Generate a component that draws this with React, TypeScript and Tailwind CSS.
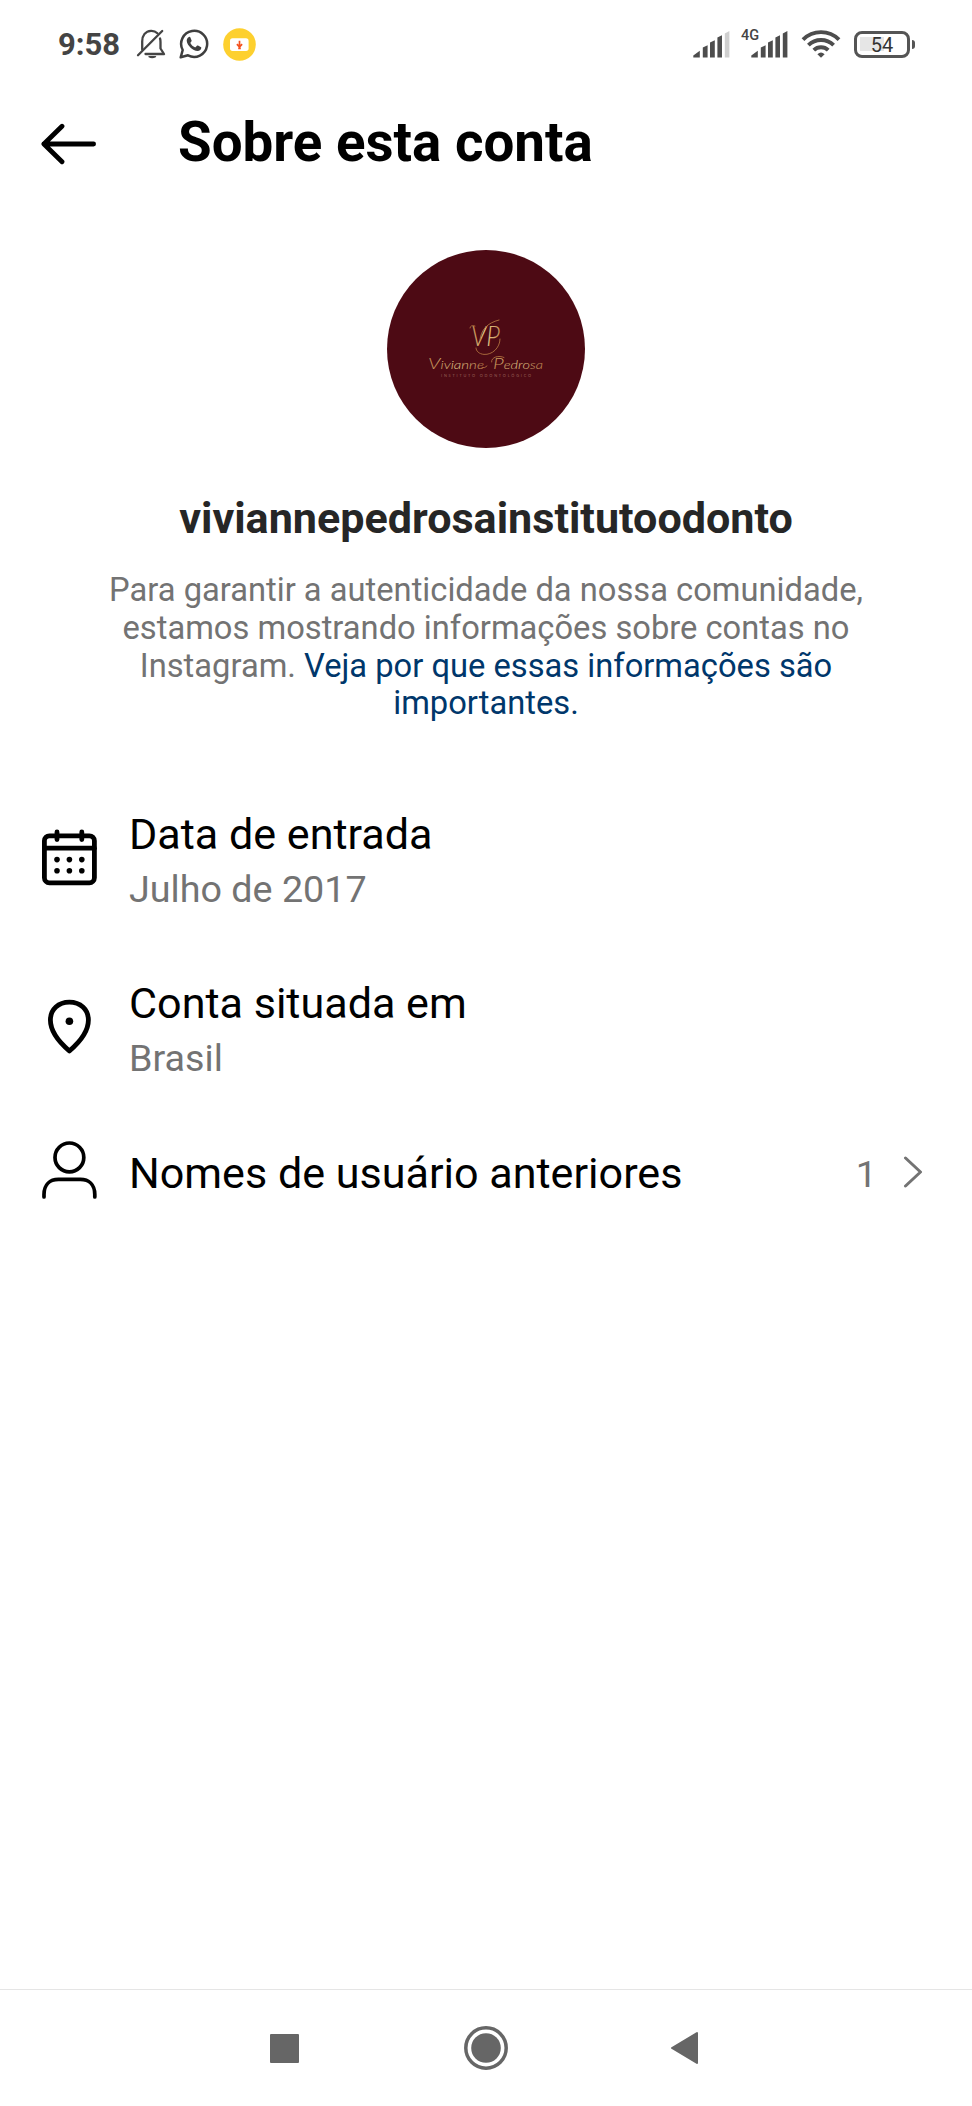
import React from 'react';

interface RowProps {
  icon: React.ReactNode;
  title: string;
  subtitle?: string;
  children?: React.ReactNode;
}

const BellOffIcon = () => (
  <svg width="30" height="32" viewBox="0 0 30 32" fill="none" stroke="#444" strokeWidth="2.3" strokeLinecap="round" strokeLinejoin="round">
    <path d="M6.2 21.5V13.5C6.2 7.5 9.5 3.2 15 2.8C17.6 2.7 19.8 3.6 21.4 5.2" />
    <path d="M24 10.5C24.4 11.6 24.5 12.6 24.5 14V20.5L28 26H9.5" />
    <path d="M2 27.3L26.2 3" />
    <path d="M13 28.6Q16 30.6 19.5 28.6Z" fill="#444" strokeWidth="1.4" />
  </svg>
);

const WhatsappIcon = () => (
  <svg width="30" height="30" viewBox="0 0 30 30">
    <path d="M1.7 28.3L3.7 21A13 13 0 1 1 9 26.3Z" fill="none" stroke="#3f3f3f" strokeWidth="2.5" strokeLinejoin="round" />
    <path d="M10.6 7.8C10 7.8 7.6 9 7.7 11.8C7.8 14.6 10 17.2 11.6 18.7C13.6 20.6 16 22 18.6 22C20.6 22 22.3 20.6 22.3 18.8C22.3 18.3 22.1 18.1 21.7 17.9L19 16.6C18.5 16.4 18.2 16.5 17.9 16.8L16.8 18.1C16.6 18.4 16.2 18.4 15.9 18.3C14 17.4 12.5 16 11.5 14.2C11.3 13.9 11.4 13.6 11.6 13.4L12.5 12.3C12.7 12 12.7 11.7 12.6 11.4L11.4 8.4C11.2 8 11 7.8 10.6 7.8Z" fill="#3f3f3f" />
  </svg>
);

const DownloadBadge = () => (
  <svg width="33" height="33" viewBox="0 0 33 33">
    <circle cx="16.5" cy="16.5" r="16.3" fill="#fdd02f" />
    <rect x="7" y="10.3" width="18.6" height="12.6" rx="2.6" fill="#fff" />
    <path d="M16.5 12.7V18M13.9 16.2L16.5 19L19.1 16.2M15.2 20.3H17.8" fill="none" stroke="#f4511e" strokeWidth="1.7" />
  </svg>
);

const SignalIcon = ({ lastColor }: { lastColor: string }) => (
  <svg width="37" height="27" viewBox="0 0 37 27" fill="#4d4d4d">
    <path d="M0.3 26.5V24.6L6.8 19.8V26.5Z" />
    <path d="M9.8 26.5V16.6L14.6 14.3V26.5Z" />
    <path d="M17 26.5V11.6L21.8 9.2V26.5Z" />
    <path d="M24.4 26.5V6.6L29 4.2V26.5Z" />
    <path d="M31.8 26.5V2.5L36.4 0V26.5Z" fill={lastColor} />
  </svg>
);

const WifiIcon = () => (
  <svg width="40" height="30" viewBox="0 0 40 30" fill="none" stroke="#4d4d4d" strokeWidth="3.9">
    <path d="M2 10.6A25.5 25.5 0 0 1 38 10.6" />
    <path d="M7.4 16.2A18 18 0 0 1 32.6 16.2" />
    <path d="M12.8 21.2A10.4 10.4 0 0 1 27.2 21.2" />
    <path d="M16.4 25.2Q20 21.9 23.6 25.2L20 28.8Z" fill="#4d4d4d" stroke="none" />
  </svg>
);

const BackArrow = () => (
  <svg width="56" height="42" viewBox="0 0 56 42" fill="none" stroke="#000" strokeWidth="4.8" strokeLinecap="round" strokeLinejoin="round">
    <path d="M21 3.2L2.9 21L21 38.8M2.9 21H52.6" />
  </svg>
);

const BrandLogo = () => (
  <svg width="198" height="198" viewBox="0 0 198 198">
    <defs>
      <linearGradient id="gold" x1="0" y1="0" x2="1" y2="0">
        <stop offset="0" stopColor="#c08a50" />
        <stop offset="0.5" stopColor="#e8cf8e" />
        <stop offset="1" stopColor="#c48a52" />
      </linearGradient>
    </defs>
    <g fill="url(#gold)" fontFamily="Lato, sans-serif" fontStyle="italic" fontWeight="300">
      <text x="84" y="96" fontSize="27" textLength="29" lengthAdjust="spacingAndGlyphs">VP</text>
      <text x="41" y="118.7" fontSize="11" textLength="56" lengthAdjust="spacingAndGlyphs">
        <tspan fontSize="15">V</tspan>ivianne
      </text>
      <text x="106" y="118.7" fontSize="11" textLength="50" lengthAdjust="spacingAndGlyphs">
        <tspan fontSize="15">P</tspan>edrosa
      </text>
    </g>
    {/* swashes around the monogram and the name */}
    <g fill="none" stroke="#b0713f" strokeWidth="0.9" strokeLinecap="round">
      <path d="M83 78C83 76 85 75 88 76" />
      <path d="M93 90C94 80 100 73 112 70" />
      <path d="M113 89C113 98 105 105 97 104.4C92 104 89 101 89 98" />
      <path d="M104.6 112C104 107 112 105 117 107.5" />
      <path d="M95 117.5Q98 118.6 100 116" />
    </g>
    <text x="54" y="127" fontSize="3.8" fill="#9a6258" fontFamily="Lato, sans-serif" textLength="90">INSTITUTO ODONTOLÓGICO</text>
  </svg>
);

const CalendarIcon = () => (
  <svg width="55" height="57" viewBox="0 0 55 57" fill="none" stroke="#000" strokeWidth="4.8" strokeLinecap="round">
    <rect x="2.4" y="6.8" width="50" height="47" rx="5" />
    <path d="M2.4 19.2H52.4" />
    <path d="M15 3V10.6M39.8 3V10.6" />
    <g fill="#000" stroke="none">
      <circle cx="15" cy="30.6" r="2.8" />
      <circle cx="27.4" cy="30.6" r="2.8" />
      <circle cx="39.8" cy="30.6" r="2.8" />
      <circle cx="15" cy="41.8" r="2.8" />
      <circle cx="27.4" cy="41.8" r="2.8" />
      <circle cx="39.8" cy="41.8" r="2.8" />
    </g>
  </svg>
);

const PinIcon = () => (
  <svg width="55" height="57" viewBox="0 0 55 57">
    <path d="M27.4 53C22 48.4 8.4 35.6 8.4 22.1C8.4 11.3 16.6 4.2 27.4 4.2C38.2 4.2 46.4 11.3 46.4 22.1C46.4 35.6 32.8 48.4 27.4 53Z" fill="none" stroke="#000" strokeWidth="4.8" strokeLinejoin="round" />
    <circle cx="27.4" cy="23.2" r="3.8" />
  </svg>
);

const PersonIcon = () => (
  <svg width="55" height="58" viewBox="0 0 55 58" fill="none" stroke="#000" strokeWidth="3.7" strokeLinecap="round">
    <circle cx="27.4" cy="16.4" r="14.4" />
    <path d="M2 56V53.5C2 43.5 8 38.4 16.5 38.4H38.3C46.8 38.4 52.8 43.5 52.8 53.5V56" />
  </svg>
);

const InfoRow: React.FC<RowProps> = ({ icon, title, subtitle, children }) => (
  <div className="flex items-center">
    <div className="w-[55px] shrink-0 mr-8 -mt-[7px]">{icon}</div>
    <div className="flex-1 flex flex-col gap-[7px]">
      <p className="text-[43.1px] leading-[50px] text-black whitespace-nowrap">{title}</p>
      {subtitle && <p className="text-[37.7px] leading-[44px] text-[#737373]">{subtitle}</p>}
    </div>
    {children}
  </div>
);

const StatusBar = () => (
  <div className="h-[88px] flex items-center justify-between pl-[58px] pr-[57px]">
    <div className="flex items-center">
      <span className="text-[31px] leading-8 font-bold text-[#444] pt-[2px] w-[78px]">9:58</span>
      <BellOffIcon />
      <div className="ml-[13px]"><WhatsappIcon /></div>
      <div className="ml-[14px]"><DownloadBadge /></div>
    </div>
    <div className="flex items-center">
      <SignalIcon lastColor="#cfcfcf" />
      <div className="relative ml-[21px]">
        <span className="absolute -left-[10px] -top-[3px] text-[14.5px] leading-4 font-medium text-[#444]">4G</span>
        <SignalIcon lastColor="#4d4d4d" />
      </div>
      <div className="ml-[13px]"><WifiIcon /></div>
      <div className="ml-[13px] flex items-center gap-[2px]">
        <div className="relative w-[56px] h-[27px] border-[3.5px] border-[#555] rounded-[8px] flex items-center justify-center">
          <div className="absolute left-[3px] top-[3px] w-[24px] h-[14px] bg-[#e6e6e6]" />
          <span className="relative text-[20px] leading-5 text-[#333] pt-px">54</span>
        </div>
        <div className="w-[3px] h-[9px] rounded-r bg-[#555]" />
      </div>
    </div>
  </div>
);

const App: React.FC = () => {
  return (
    <div className="w-[972px] h-[2106px] bg-white flex flex-col overflow-hidden font-['Roboto',sans-serif]">
      <StatusBar />

      {/* Header */}
      <div className="h-[112px] flex items-center pl-[41px]">
        <BackArrow />
        <h1 className="ml-[81px] pb-[5px] text-[54.7px] leading-[64px] font-bold text-black whitespace-nowrap">Sobre esta conta</h1>
      </div>

      {/* Profile */}
      <div className="mt-[50px] flex flex-col items-center text-center">
        <div className="size-[198px] rounded-full overflow-hidden bg-[#4d0a14]">
          <BrandLogo />
        </div>
        <h2 className="mt-[46px] text-[43.1px] leading-[50px] font-bold text-[#262626]">viviannepedrosainstitutoodonto</h2>
        <p className="mt-[28px] text-[32.7px] leading-[37.8px] text-[#737373] whitespace-nowrap">
          Para garantir a autenticidade da nossa comunidade,<br />
          estamos mostrando informações sobre contas no<br />
          Instagram. <span className="text-[#00376b]">Veja por que essas informações são<br />importantes.</span>
        </p>
      </div>

      {/* Account details */}
      <div className="mt-[87px] pl-[42px] pr-[49px] flex flex-col gap-[68px]">
        <InfoRow icon={<CalendarIcon />} title="Data de entrada" subtitle="Julho de 2017" />
        <InfoRow icon={<PinIcon />} title="Conta situada em" subtitle="Brasil" />
        <InfoRow icon={<PersonIcon />} title="Nomes de usuário anteriores">
          <span className="text-[37.7px] leading-[44px] text-[#737373] mr-[26px]">1</span>
          <svg className="-mt-[4px]" width="20" height="32" viewBox="0 0 20 32" fill="none" stroke="#737373" strokeWidth="3" strokeLinecap="round" strokeLinejoin="round">
            <path d="M2.5 2L17.5 16L2.5 30" />
          </svg>
        </InfoRow>
      </div>

      {/* Navigation bar */}
      <div className="mt-auto h-[117px] border-t border-[#e5e5e5] flex items-center pl-[270px]">
        <div className="size-[29px] rounded-[1px] bg-[#666]" />
        <svg className="ml-[165px]" width="44" height="44" viewBox="0 0 44 44">
          <circle cx="22" cy="22" r="20.2" fill="none" stroke="#666" strokeWidth="3.5" />
          <circle cx="22" cy="22" r="14.8" fill="#666" />
        </svg>
        <svg className="ml-[162px]" width="29" height="34" viewBox="0 0 29 34">
          <path d="M2 17L27 2V32Z" fill="#666" stroke="#666" strokeWidth="2" strokeLinejoin="round" />
        </svg>
      </div>
    </div>
  );
};

export default App;
